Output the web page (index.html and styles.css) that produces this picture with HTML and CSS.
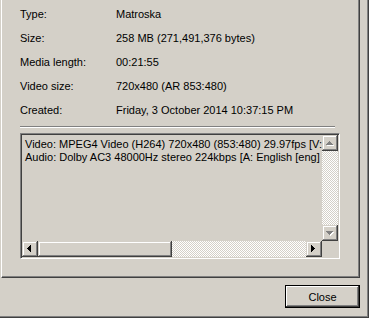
FILE: index.html
```html
<!DOCTYPE html>
<html lang="en">
<head>
  <meta charset="UTF-8">
  <title>Properties</title>
  <link rel="stylesheet" href="styles.css">
</head>
<body>
  <!-- shared dither pattern for scrollbar tracks -->
  <svg class="defs" width="0" height="0">
    <defs>
      <pattern id="dither" width="2" height="2" patternUnits="userSpaceOnUse">
        <rect width="2" height="2" fill="#d4d0c8"/>
        <rect width="1" height="1" fill="#fff"/>
        <rect x="1" y="1" width="1" height="1" fill="#fff"/>
      </pattern>
    </defs>
  </svg>

  <div class="window">
    <!-- Tab page -->
    <div class="page">
      <div class="props">
        <span>Type:</span><span>Matroska</span>
        <span>Size:</span><span>258 MB (271,491,376 bytes)</span>
        <span>Media length:</span><span>00:21:55</span>
        <span>Video size:</span><span>720x480 (AR 853:480)</span>
        <span>Created:</span><span>Friday, 3 October 2014 10:37:15 PM</span>
      </div>
      <div class="sep"></div>

      <!-- Read-only memo with scrollbars -->
      <div class="memo">
        <div class="memo-text">Video: MPEG4 Video (H264) 720x480 (853:480) 29.97fps [V:
Audio: Dolby AC3 48000Hz stereo 224kbps [A: English [eng]</div>
        <div class="vscroll">
          <div class="sbtn">
            <svg width="16" height="16" shape-rendering="crispEdges">
              <g fill="#fff"><rect x="8" y="7" width="1" height="1"/><rect x="7" y="8" width="3" height="1"/><rect x="6" y="9" width="5" height="1"/><rect x="5" y="10" width="7" height="1"/></g>
              <g fill="#808080"><rect x="7" y="6" width="1" height="1"/><rect x="6" y="7" width="3" height="1"/><rect x="5" y="8" width="5" height="1"/><rect x="4" y="9" width="7" height="1"/></g>
            </svg>
          </div>
          <div class="track vtrack"><svg width="16" height="74"><rect width="16" height="74" fill="url(#dither)"/></svg></div>
          <div class="sbtn">
            <svg width="16" height="16" shape-rendering="crispEdges">
              <g fill="#fff"><rect x="5" y="7" width="7" height="1"/><rect x="6" y="8" width="5" height="1"/><rect x="7" y="9" width="3" height="1"/><rect x="8" y="10" width="1" height="1"/></g>
              <g fill="#808080"><rect x="4" y="6" width="7" height="1"/><rect x="5" y="7" width="5" height="1"/><rect x="6" y="8" width="3" height="1"/><rect x="7" y="9" width="1" height="1"/></g>
            </svg>
          </div>
        </div>
        <div class="hscroll">
          <div class="sbtn">
            <svg width="16" height="16" shape-rendering="crispEdges" fill="#000">
              <rect x="5" y="7" width="1" height="1"/><rect x="6" y="6" width="1" height="3"/><rect x="7" y="5" width="1" height="5"/><rect x="8" y="4" width="1" height="7"/>
            </svg>
          </div>
          <div class="thumb"></div>
          <div class="track htrack"><svg width="134" height="16"><rect width="134" height="16" fill="url(#dither)"/></svg></div>
          <div class="sbtn">
            <svg width="16" height="16" shape-rendering="crispEdges" fill="#000">
              <rect x="5" y="4" width="1" height="7"/><rect x="6" y="5" width="1" height="5"/><rect x="7" y="6" width="1" height="3"/><rect x="8" y="7" width="1" height="1"/>
            </svg>
          </div>
        </div>
        <div class="corner"></div>
      </div>
    </div>

    <!-- Dialog buttons -->
    <div class="buttons">
      <button class="btn default">Close</button>
    </div>
  </div>
</body>
</html>
```

FILE: styles.css
```css
/* Base */
* {
  margin: 0;
  padding: 0;
  box-sizing: border-box;
}
body {
  background: #d4d0c8;
  color: #000;
  font-family: "Liberation Sans", Arial, sans-serif;
  font-size: 11px;
}
.defs {
  position: absolute;
}
/* Window frame */
.window {
  width: 369px;
  height: 318px;
  border-right: 1px solid #404040;
  border-bottom: 1px solid #404040;
  box-shadow: inset -1px -1px #808080;
}
/* Tab page */
.page {
  margin-left: 1px;
  width: 359px;
  height: 278px;
  border-left: 1px solid #fff;
  border-right: 1px solid #404040;
  border-bottom: 1px solid #404040;
  box-shadow: inset -1px -1px #808080;
  padding: 2px 0 0 18px;
}
.props {
  display: grid;
  grid-template-columns: 96px auto;
  grid-auto-rows: 24px;
  line-height: 24px;
  white-space: nowrap;
}
.sep {
  width: 315px;
  height: 2px;
  border-top: 1px solid #808080;
  border-bottom: 1px solid #fff;
  margin: 4px 0 5px;
}
/* Memo box */
.memo {
  width: 320px;
  height: 126px;
  border: 1px solid;
  border-color: #808080 #fff #fff #808080;
  box-shadow: inset 1px 1px #404040, inset -1px -1px #d4d0c8;
  padding: 1px;
  display: grid;
  grid-template-columns: 300px 16px;
  grid-template-rows: 106px 16px;
}
.memo-text {
  padding: 3px 0 0 3px;
  line-height: 13px;
  white-space: pre;
  overflow: hidden;
}
.vscroll {
  display: flex;
  flex-direction: column;
}
.hscroll {
  display: flex;
}
.sbtn, .thumb {
  flex: none;
  width: 16px;
  height: 16px;
  box-shadow: inset -1px -1px #404040, inset 1px 1px #d4d0c8, inset -2px -2px #808080, inset 2px 2px #fff;
}
.sbtn svg, .track svg {
  display: block;
}
.thumb {
  width: 134px;
}
.track {
  flex: none;
  overflow: hidden;
}
.vtrack {
  height: 74px;
}
.htrack {
  width: 134px;
}
/* Buttons */
.buttons {
  display: flex;
  justify-content: flex-end;
  padding: 7px 8px 0 0;
}
.btn {
  width: 75px;
  height: 23px;
  background: #d4d0c8;
  color: #000;
  font: inherit;
  border: none;
  box-shadow: inset -1px -1px #404040, inset 1px 1px #fff, inset -2px -2px #808080;
}
.btn.default {
  border: 1px solid #000;
}
```
